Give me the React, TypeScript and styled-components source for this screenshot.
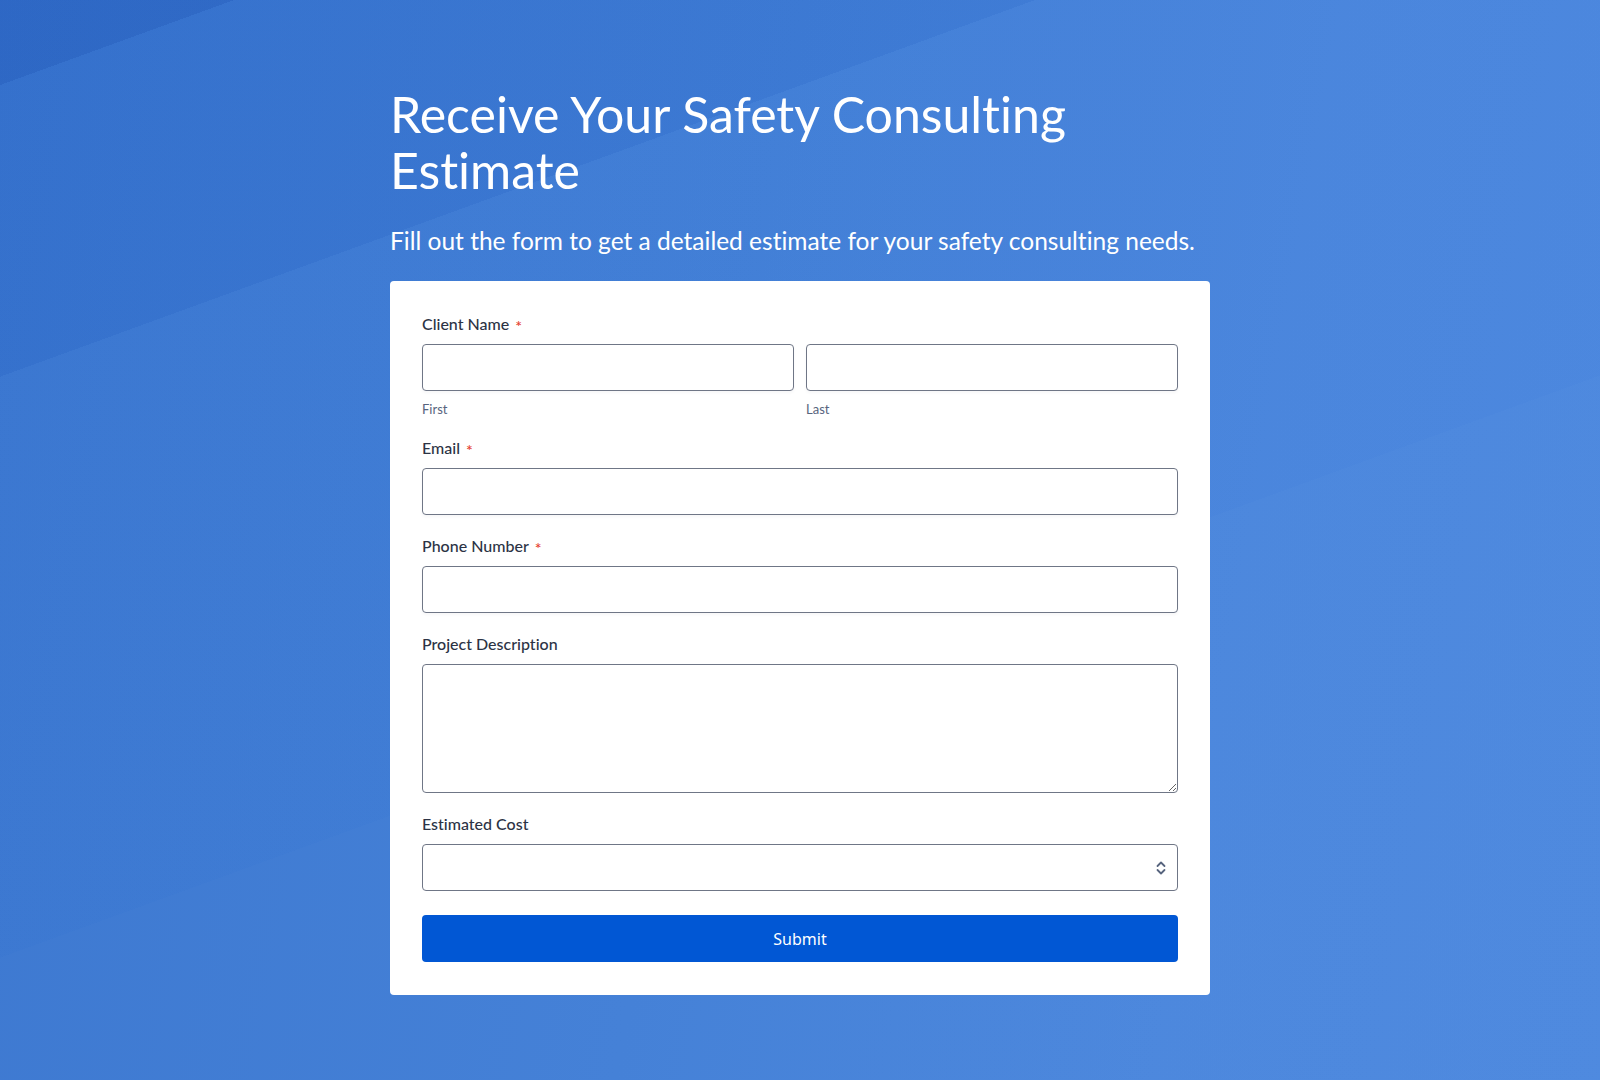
import React from 'react'
import styled, { createGlobalStyle } from 'styled-components'

const GlobalStyle = createGlobalStyle`
  html, body {
    margin: 0;
    padding: 0;
  }
  body {
    font-family: Lato, "Noto Sans", Arial, sans-serif;
    font-variant-ligatures: none;
  }
  * {
    box-sizing: border-box;
  }
`

const Page = styled.div`
  min-height: 100vh;
  width: 100%;
  padding: 86px 0 80px;
  display: flex;
  flex-direction: column;
  align-items: center;
  background:
    linear-gradient(160deg, rgba(22, 72, 170, 0.22) 0 80px, rgba(0, 0, 0, 0) 80px),
    linear-gradient(160deg, rgba(20, 60, 160, 0.06) 80px 354px, rgba(255, 255, 255, 0.02) 354px 900px, rgba(255, 255, 255, 0.03) 900px),
    linear-gradient(100deg, #3774cf 0%, #3f7dd6 45%, #4784dc 75%, #4986de 100%);
`

const Container = styled.div`
  width: 820px;
`

const Heading = styled.h1`
  margin: 0;
  font-family: Lato, "Noto Sans", sans-serif;
  font-weight: 400;
  font-size: 50px;
  line-height: 56px;
  color: #ffffff;
  font-variant-ligatures: none;
  font-feature-settings: "liga" 0, "dlig" 0;
`

const SubHeading = styled.p`
  margin: 28px 0 0;
  font-family: Lato, "Noto Sans", sans-serif;
  font-size: 24.5px;
  line-height: 30px;
  color: #ffffff;
  font-feature-settings: "liga" 0, "dlig" 0;
`

const Card = styled.form`
  margin-top: 25px;
  background: #ffffff;
  border-radius: 4px;
  padding: 33px 32px 33px;
  display: flex;
  flex-direction: column;
  gap: 21px;
`

const Field = styled.div`
  display: flex;
  flex-direction: column;
`

const Label = styled.label`
  font-family: Lato, "Noto Sans", sans-serif;
  font-size: 16px;
  line-height: 20px;
  font-weight: 500;
  color: #2c3345;
  margin-bottom: 10px;
`

const Required = styled.span`
  color: #e5412f;
  font-size: 16px;
  margin-left: 6px;
  position: relative;
  top: 2px;
`

const Row = styled.div`
  display: grid;
  grid-template-columns: 1fr 1fr;
  gap: 12px;
`

const Column = styled.div`
  display: flex;
  flex-direction: column;
`

const TextInput = styled.input`
  width: 100%;
  height: 47px;
  border: 1px solid #6f7686;
  border-radius: 4px;
  padding: 0 12px;
  font-family: Lato, sans-serif;
  font-size: 15px;
  color: #2c3345;
  background: #ffffff;
  box-shadow: 0 2px 3px rgba(40, 50, 70, 0.04);
  outline: none;
`

const SubLabel = styled.span`
  margin-top: 10px;
  font-family: Lato, "Noto Sans", sans-serif;
  font-size: 13px;
  line-height: 16px;
  color: #57647e;
`

const TextArea = styled.textarea`
  width: 100%;
  height: 129px;
  border: 1px solid #6f7686;
  border-radius: 4px;
  padding: 10px 12px;
  font-family: Lato, sans-serif;
  font-size: 15px;
  color: #2c3345;
  background: #ffffff;
  display: block;
  outline: none;
`

const SelectWrap = styled.div`
  position: relative;
`

const Select = styled.select`
  width: 100%;
  height: 47px;
  border: 1px solid #6f7686;
  border-radius: 4px;
  padding: 0 36px 0 12px;
  font-family: Lato, sans-serif;
  font-size: 15px;
  color: #2c3345;
  background: #ffffff;
  appearance: none;
  -webkit-appearance: none;
  outline: none;
`

const SelectArrow = styled.svg`
  position: absolute;
  right: 12px;
  top: 50%;
  transform: translateY(-50%);
  pointer-events: none;
`

const SubmitButton = styled.button`
  margin-top: 3px;
  width: 100%;
  height: 47px;
  border: none;
  border-radius: 4px;
  background: #0157d4;
  color: #ffffff;
  font-family: "Noto Sans", Lato, sans-serif;
  font-size: 16px;
  font-weight: 400;
  cursor: pointer;
`

const App: React.FC = () => {
  return (
    <Page>
      <GlobalStyle />
      <Container>
        <Heading>Receive Your Safety Consulting Estimate</Heading>
        <SubHeading>Fill out the form to get a detailed estimate for your safety consulting needs.</SubHeading>

        <Card onSubmit={(e) => e.preventDefault()}>
          <Field>
            <Label>
              Client Name<Required>*</Required>
            </Label>
            <Row>
              <Column>
                <TextInput type="text" />
                <SubLabel>First</SubLabel>
              </Column>
              <Column>
                <TextInput type="text" />
                <SubLabel>Last</SubLabel>
              </Column>
            </Row>
          </Field>

          <Field>
            <Label>
              Email<Required>*</Required>
            </Label>
            <TextInput type="email" />
          </Field>

          <Field>
            <Label>
              Phone Number<Required>*</Required>
            </Label>
            <TextInput type="tel" />
          </Field>

          <Field>
            <Label>Project Description</Label>
            <TextArea />
          </Field>

          <Field>
            <Label>Estimated Cost</Label>
            <SelectWrap>
              <Select defaultValue="">
                <option value="" />
              </Select>
              <SelectArrow width="10" height="16" viewBox="0 0 10 16" fill="none">
                <path d="M1.5 6 L5 2.5 L8.5 6" stroke="#57647e" strokeWidth="1.8" strokeLinecap="round" strokeLinejoin="round" />
                <path d="M1.5 10 L5 13.5 L8.5 10" stroke="#57647e" strokeWidth="1.8" strokeLinecap="round" strokeLinejoin="round" />
              </SelectArrow>
            </SelectWrap>
          </Field>

          <SubmitButton type="submit">Submit</SubmitButton>
        </Card>
      </Container>
    </Page>
  )
}

export default App
